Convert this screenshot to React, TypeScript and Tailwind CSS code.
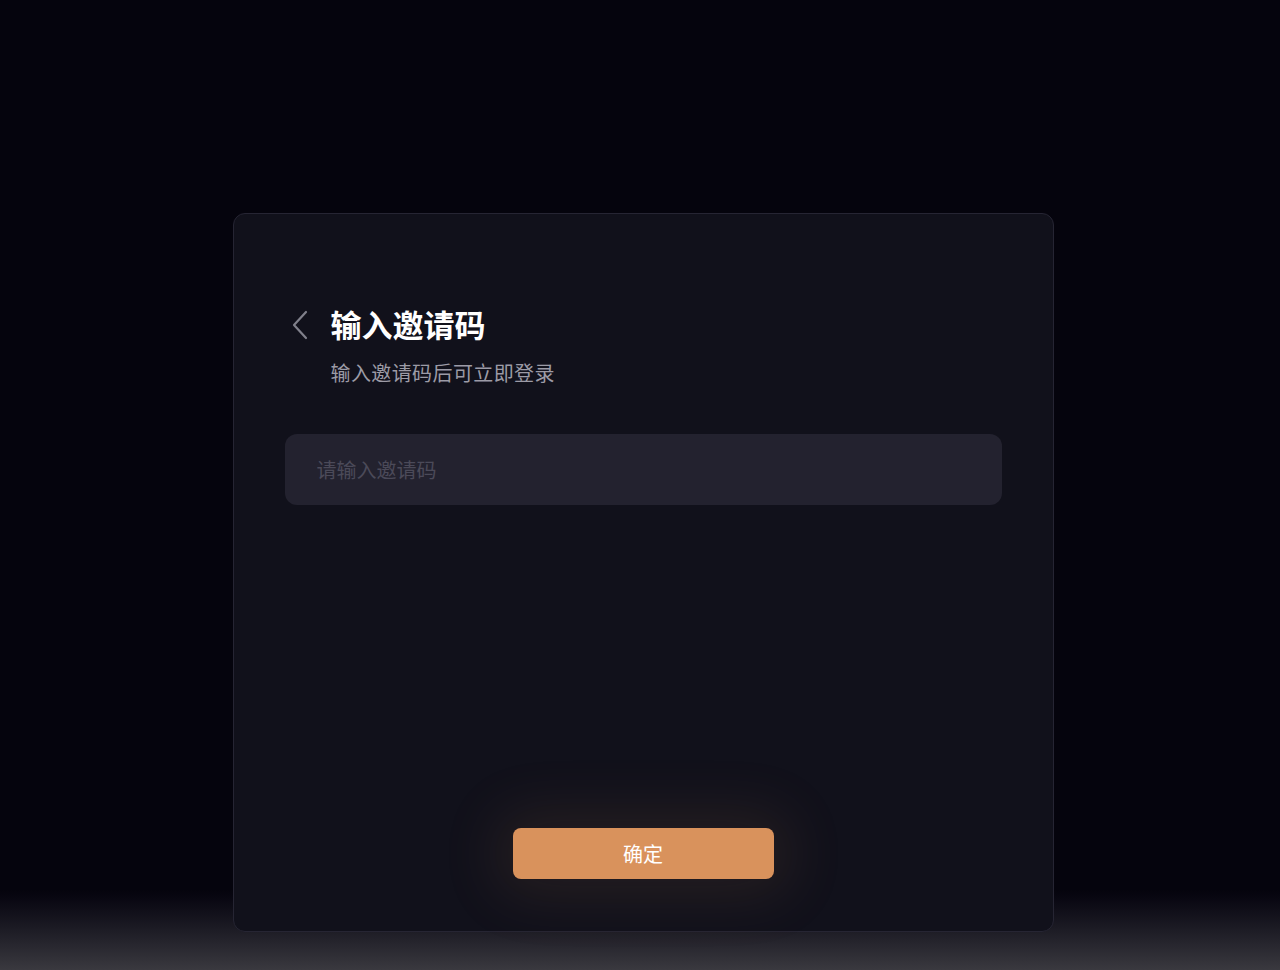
import React, { useState } from 'react';

const font = { fontFamily: '"Noto Sans CJK SC", "Noto Sans", sans-serif' };

const InviteCode: React.FC = () => {
  const [code, setCode] = useState('');

  return (
    <div
      className="relative min-h-[970px] w-full bg-[#05040d] flex justify-center pt-[213px] pl-[6px] overflow-hidden"
      style={font}
    >
      {/* bottom fade */}
      <div className="absolute left-0 right-0 bottom-0 h-[80px] bg-gradient-to-b from-[#05040d] to-[#3a393f]" />

      <div className="relative w-[821px] h-[719px] rounded-[12px] border border-[#262533] bg-[#11111b] flex flex-col px-[51px] pt-[89px] pb-[52px]">
        <div className="flex items-center">
          <button className="w-[46px] h-[40px] flex items-center text-[#80808b] mt-[2px]">
            <svg width="18" height="30" viewBox="0 0 18 30" fill="none" stroke="currentColor" strokeWidth="2.2" strokeLinecap="round" strokeLinejoin="round" className="ml-[6px]">
              <path d="M15 2 L3 15 L15 28" />
            </svg>
          </button>
          <h1 className="text-[31px] leading-[40px] font-bold text-white">输入邀请码</h1>
        </div>
        <p className="ml-[46px] mt-[13px] text-[20px] leading-[30px] tracking-[0.4px] text-[#9c9ba6]">输入邀请码后可立即登录</p>

        <input
          value={code}
          onChange={e => setCode(e.target.value)}
          placeholder="请输入邀请码"
          className="mt-[46px] h-[71px] w-full rounded-[12px] bg-[#23222f] px-[32px] text-[20px] text-white placeholder:text-[#4b4a59] outline-none"
          style={font}
        />

        <div className="mt-auto flex justify-center">
          <button className="w-[261px] h-[51px] rounded-[8px] bg-[#d9925c] text-white text-[20px] shadow-[0_0_60px_16px_rgba(217,146,92,0.1)]">
            确定
          </button>
        </div>
      </div>
    </div>
  );
};

export default InviteCode;
